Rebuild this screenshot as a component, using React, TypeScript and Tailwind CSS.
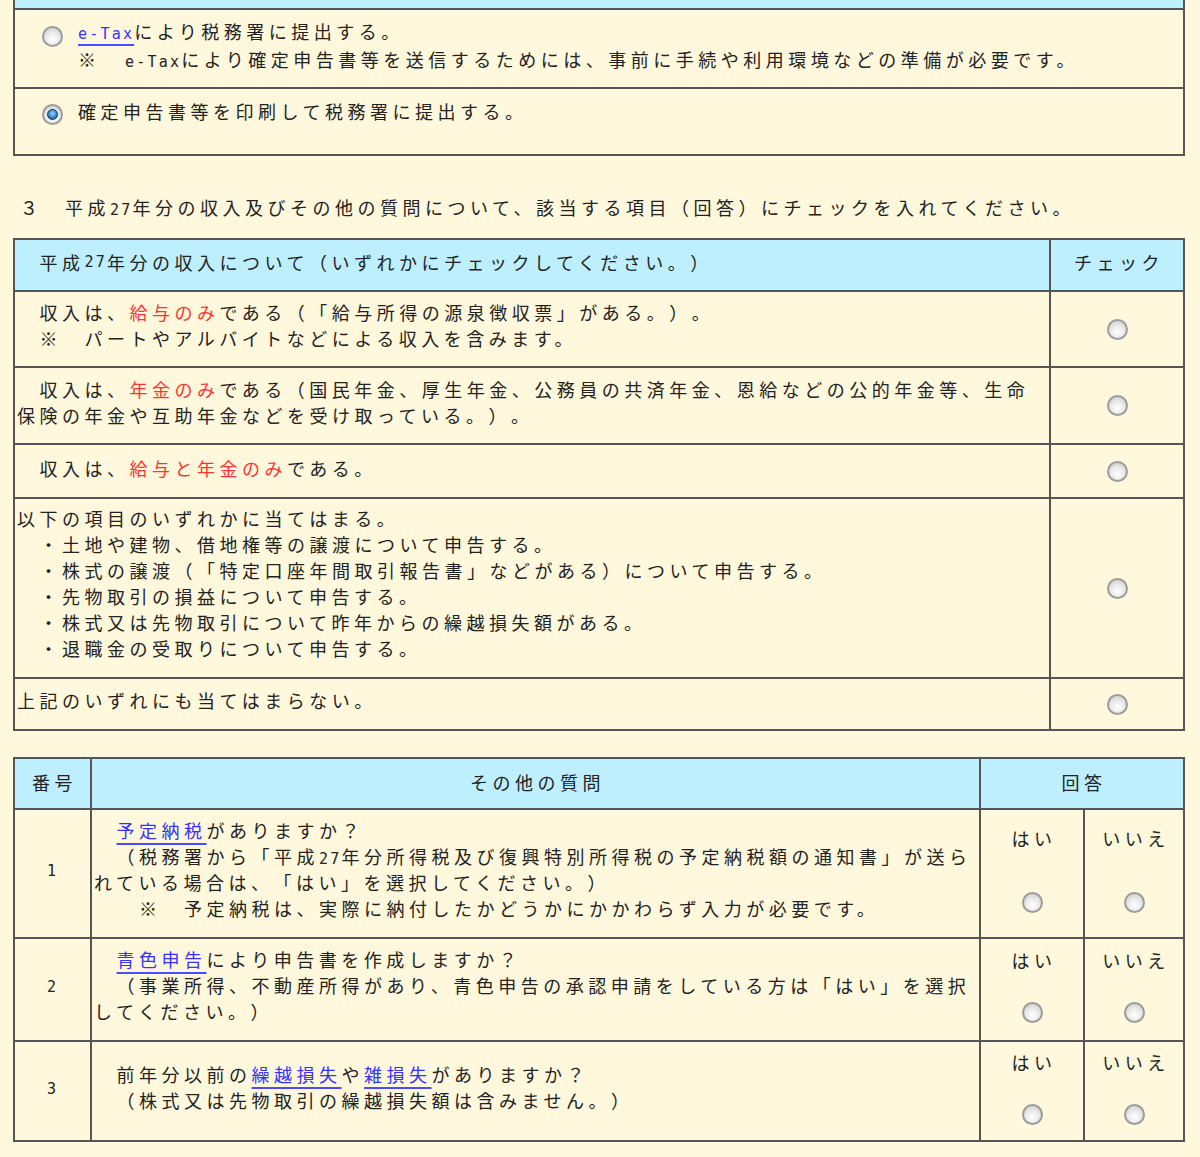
import React from 'react';

type Line = React.ReactNode;

const Radio: React.FC<{ checked?: boolean; className?: string }> = ({ checked = false, className = '' }) => (
  <span
    className={`inline-flex h-[21px] w-[21px] shrink-0 items-center justify-center rounded-full border-2 border-[#9c9c9c] bg-[radial-gradient(circle_at_50%_65%,#ffffff_0%,#ebebeb_45%,#c6c6c6_100%)] ${className}`}
  >
    {checked && (
      <span className="h-[11px] w-[11px] rounded-full border border-[#1b3152] bg-[radial-gradient(circle_at_50%_40%,#9ad6ff_0%,#2f80d0_60%,#174a80_100%)]" />
    )}
  </span>
);

// half-width characters (ASCII)
const H: React.FC<{ children: React.ReactNode; className?: string }> = ({ children, className = '' }) => (
  <span className={`font-['DejaVu_Sans_Mono',monospace] text-[15px] leading-none tracking-[2.2px] ${className}`}>{children}</span>
);

const Red: React.FC<{ children: React.ReactNode }> = ({ children }) => (
  <span className="text-[#ff3333]">{children}</span>
);

const A: React.FC<{ children: React.ReactNode }> = ({ children }) => (
  <span className="text-[#3333ff] underline decoration-[#4a4aff] decoration-2 underline-offset-[5px]">{children}</span>
);

const SP = '　';

const incomeRows: { h: string; pb: string; lines: Line[] }[] = [
  {
    h: 'h-[76px]',
    pb: 'pb-[9px]',
    lines: [
      <>{SP}収入は、<Red>給与のみ</Red>である（「給与所得の源泉徴収票」がある。）。</>,
      '　※　パートやアルバイトなどによる収入を含みます。',
    ],
  },
  {
    h: 'h-[77px]',
    pb: 'pb-[7px]',
    lines: [
      <>{SP}収入は、<Red>年金のみ</Red>である（国民年金、厚生年金、公務員の共済年金、恩給などの公的年金等、生命</>,
      '保険の年金や互助年金などを受け取っている。）。',
    ],
  },
  {
    h: 'h-[54px]',
    pb: 'pb-[7px]',
    lines: [<>{SP}収入は、<Red>給与と年金のみ</Red>である。</>],
  },
  {
    h: 'h-[180px]',
    pb: 'pb-[11px]',
    lines: [
      '以下の項目のいずれかに当てはまる。',
      '　・土地や建物、借地権等の譲渡について申告する。',
      '　・株式の譲渡（「特定口座年間取引報告書」などがある）について申告する。',
      '　・先物取引の損益について申告する。',
      '　・株式又は先物取引について昨年からの繰越損失額がある。',
      '　・退職金の受取りについて申告する。',
    ],
  },
  {
    h: 'h-[52px]',
    pb: 'pb-[9px]',
    lines: ['上記のいずれにも当てはまらない。'],
  },
];

const otherRows: { no: string; h: string; pt: string; gap: string; lines: Line[] }[] = [
  {
    no: '1',
    h: 'h-[129px]',
    pt: 'pt-[15px]',
    gap: 'mt-[41px]',
    lines: [
      <>{SP}<A>予定納税</A>がありますか？</>,
      <>{SP}（税務署から「平成<H>27</H>年分所得税及び復興特別所得税の予定納税額の通知書」が送ら</>,
      'れている場合は、「はい」を選択してください。）',
      '　　※　予定納税は、実際に納付したかどうかにかかわらず入力が必要です。',
    ],
  },
  {
    no: '2',
    h: 'h-[103px]',
    pt: 'pt-[8px]',
    gap: 'mt-[29px]',
    lines: [
      <>{SP}<A>青色申告</A>により申告書を作成しますか？</>,
      '　（事業所得、不動産所得があり、青色申告の承認申請をしている方は「はい」を選択',
      'してください。）',
    ],
  },
  {
    no: '3',
    h: 'h-[100px]',
    pt: 'pt-[7px]',
    gap: 'mt-[29px]',
    lines: [
      <>{SP}前年分以前の<A>繰越損失</A>や<A>雑損失</A>がありますか？</>,
      '　（株式又は先物取引の繰越損失額は含みません。）',
    ],
  },
];

const App: React.FC = () => {
  return (
    <div className="min-h-screen bg-[#fff8dc] font-['Noto_Sans_CJK_JP',sans-serif] text-[18px] tracking-[4.5px] text-[#222] [text-spacing-trim:space-all]">
      <div className="ml-[13px] w-[1172px] pb-[15px]">
        {/* 提出方法 */}
        <div className="border-x-2 border-b-2 border-[#555]">
          <div className="h-[8px] bg-[#bdefff]" />
          <div className="flex h-[79px] items-start border-t-2 border-[#555] pl-[27px] pt-[7px] leading-[28px]">
            <Radio className="mt-[9px]" />
            <div className="ml-[15px]">
              <div className="whitespace-nowrap">
                <A><H>e-Tax</H></A>により税務署に提出する。
              </div>
              <div className="whitespace-nowrap">
                ※{SP}<H className="ml-[2px]">e-Tax</H>により確定申告書等を送信するためには、事前に手続や利用環境などの準備が必要です。
              </div>
            </div>
          </div>
          <div className="flex h-[67px] items-start border-t-2 border-[#555] pl-[27px] pt-[8px] leading-[28px]">
            <Radio checked className="mt-[7px]" />
            <div className="ml-[15px] whitespace-nowrap">確定申告書等を印刷して税務署に提出する。</div>
          </div>
        </div>

        <p className="mb-[17px] mt-[37px] whitespace-nowrap pl-[7px] leading-[28px]">
          ３{SP}平成<H>27</H>年分の収入及びその他の質問について、該当する項目（回答）にチェックを入れてください。
        </p>

        {/* 収入 */}
        <div className="border-2 border-[#555] leading-[26px]">
          <div className="grid h-[50px] grid-cols-[1034px_134px] bg-[#bdefff]">
            <div className="flex items-center whitespace-nowrap px-[2px] pb-[6px]">
              {SP}平成<H>27</H>年分の収入について（いずれかにチェックしてください。）
            </div>
            <div className="flex items-center justify-center border-l-2 border-[#555] pb-[6px] pl-[4px]">チェック</div>
          </div>
          {incomeRows.map((row, i) => (
            <div key={i} className={`grid grid-cols-[1034px_134px] border-t-2 border-[#555] ${row.h}`}>
              <div className={`flex items-center px-[2px] ${row.pb}`}>
                <div>
                  {row.lines.map((l, j) => (
                    <div key={j} className="whitespace-nowrap">{l}</div>
                  ))}
                </div>
              </div>
              <div className="flex items-center justify-center border-l-2 border-[#555]">
                <Radio />
              </div>
            </div>
          ))}
        </div>

        {/* その他の質問 */}
        <div className="mt-[26px] border-2 border-[#555] leading-[26px]">
          <div className="grid h-[49px] grid-cols-[75px_889px_204px] bg-[#bdefff]">
            <div className="flex items-center justify-center pb-[4px] pl-[4px]">番号</div>
            <div className="flex items-center justify-center border-l-2 border-[#555] pb-[4px] pl-[4px]">その他の質問</div>
            <div className="flex items-center justify-center border-l-2 border-[#555] pb-[4px] pl-[4px]">回答</div>
          </div>
          {otherRows.map((row) => (
            <div key={row.no} className={`grid grid-cols-[75px_889px_104px_100px] border-t-2 border-[#555] ${row.h}`}>
              <div className="flex items-center justify-center pb-[4px]">
                <H>{row.no}</H>
              </div>
              <div className="flex items-center border-l-2 border-[#555] px-[2px] pb-[9px]">
                <div>
                  {row.lines.map((l, j) => (
                    <div key={j} className="whitespace-nowrap">{l}</div>
                  ))}
                </div>
              </div>
              <div className={`flex flex-col items-center border-l-2 border-[#555] pl-[4px] ${row.pt}`}>
                <span>はい</span>
                <Radio className={`-ml-[4px] ${row.gap}`} />
              </div>
              <div className={`flex flex-col items-center border-l-2 border-[#555] pl-[4px] ${row.pt}`}>
                <span>いいえ</span>
                <Radio className={`-ml-[4px] ${row.gap}`} />
              </div>
            </div>
          ))}
        </div>
      </div>
    </div>
  );
};

export default App;
